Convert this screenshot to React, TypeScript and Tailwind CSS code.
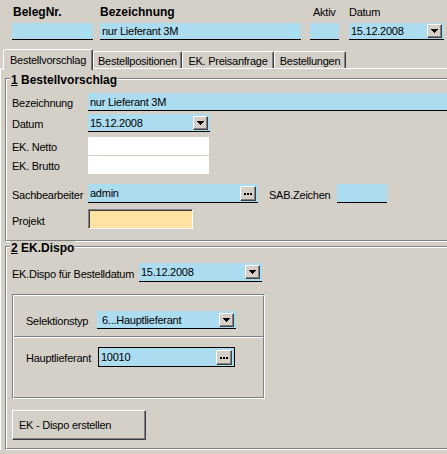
import React from "react";

type BtnKind = "drop" | "dots" | undefined;

const DropBtn = () => (
  <div className="flex h-[14px] w-[15px] shrink-0 items-center justify-center border border-t-white border-l-white border-b-[#404040] border-r-[#404040] bg-[#d4d0c8] shadow-[inset_-1px_-1px_#808080]">
    <svg width="7" height="4" viewBox="0 0 7 4" shapeRendering="crispEdges">
      <path d="M0 0h7v1H0zM1 1h5v1H1zM2 2h3v1H2zM3 3h1v1H3z" fill="#000" />
    </svg>
  </div>
);

const DotsBtn = () => (
  <div className="flex h-[15px] w-[16px] shrink-0 items-center justify-center border border-t-white border-l-white border-b-[#404040] border-r-[#404040] bg-[#d4d0c8] shadow-[inset_-1px_-1px_#808080]">
    <svg width="8" height="2" viewBox="0 0 8 2" shapeRendering="crispEdges" className="mt-[1px]">
      <path d="M0 0h2v2H0zM3 0h2v2H3zM6 0h2v2H6z" fill="#000" />
    </svg>
  </div>
);

interface FieldProps {
  className: string;
  text?: string;
  btn?: BtnKind;
}

const Field = ({ className, text, btn }: FieldProps) => (
  <div className={`flex items-center justify-between pl-[2px] pr-[2px] ${className}`}>
    <span className="whitespace-nowrap leading-[14px]">{text}</span>
    {btn === "drop" && <DropBtn />}
    {btn === "dots" && <DotsBtn />}
  </div>
);

const Tab = ({ label, active, className }: { label: string; active?: boolean; className: string }) => (
  <div
    className={`flex justify-center rounded-t-[2px] border-t border-l border-r border-white border-r-[#404040] bg-[#d4d0c8] leading-[14px] shadow-[inset_-1px_0_#808080] ${
      active ? "-mb-[2px] h-[21px] pt-[3px]" : "h-[17px] pt-[2px]"
    } ${className}`}
  >
    {label}
  </div>
);

const App = () => {
  return (
    <div className="h-[454px] w-[447px] overflow-hidden bg-[#d4d0c8] font-['Liberation_Sans',Arial,sans-serif] text-[11px] tracking-[-0.25px] text-black">
      {/* Kopfzeile */}
      <div className="flex pl-[12px] pt-[5px]">
        <div className="w-[81px]">
          <div className="h-[14px] pl-[1px] text-[12px] font-bold leading-[14px] tracking-normal">BelegNr.</div>
          <Field className="mt-[4px] h-[17px] border-b border-black bg-[#acdcf0]" />
        </div>
        <div className="ml-[7px] w-[201px]">
          <div className="h-[14px] text-[12px] font-bold leading-[14px] tracking-normal">Bezeichnung</div>
          <Field className="mt-[4px] h-[17px] border-b border-black bg-[#acdcf0]" text="nur Lieferant 3M" />
        </div>
        <div className="ml-[9px] w-[29px]">
          <div className="h-[14px] pl-[3px] leading-[14px]">Aktiv</div>
          <Field className="mt-[4px] h-[17px] border-b border-black bg-[#acdcf0]" />
        </div>
        <div className="ml-[10px] w-[95px]">
          <div className="h-[14px] leading-[14px]">Datum</div>
          <Field className="mt-[4px] h-[17px] border-b border-black bg-[#acdcf0] pl-[1px]" text="15.12.2008" btn="drop" />
        </div>
      </div>

      {/* Reiter */}
      <div className="relative z-10 mt-[9px] flex h-[19px] items-end pl-[3px]">
        <Tab label="Bestellvorschlag" active className="w-[90px]" />
        <Tab label="Bestellpositionen" className="w-[89px]" />
        <Tab label="EK. Preisanfrage" className="w-[92px]" />
        <Tab label="Bestellungen" className="w-[72px]" />
      </div>

      <div className="w-[470px] border-t border-l border-white pl-[4px] pt-[9px]">
        {/* 1 Bestellvorschlag */}
        <div className="relative h-[164px] border border-t-[#808080] border-l-[#808080] border-b-white border-r-white">
          <div className="absolute left-[4px] top-[-6px] bg-[#d4d0c8] px-[1px] text-[12px] font-bold leading-[14px] tracking-normal">
            <span className="underline">1</span> Bestellvorschlag
          </div>
          <div className="h-full border border-t-white border-l-white border-b-[#808080] border-r-[#808080] pl-[5px]">
            <div className="mt-[13px] flex h-[18px] items-center">
              <div className="w-[76px] pt-[3px]">Bezeichnung</div>
              <Field className="h-[18px] flex-1 border-b border-black bg-[#acdcf0]" text="nur Lieferant 3M" />
            </div>
            <div className="mt-[3px] flex h-[18px] items-center">
              <div className="w-[76px] pt-[3px]">Datum</div>
              <Field className="h-[18px] w-[122px] border-b border-black bg-[#acdcf0] pl-[1px]" text="15.12.2008" btn="drop" />
            </div>
            <div className="mt-[5px] flex h-[18px] items-center">
              <div className="w-[76px] pt-[3px]">EK. Netto</div>
              <div className="h-[18px] w-[121px] bg-white" />
            </div>
            <div className="mt-[1px] flex h-[18px] items-center">
              <div className="w-[76px] pt-[3px]">EK. Brutto</div>
              <div className="h-[18px] w-[121px] bg-white" />
            </div>
            <div className="mt-[10px] flex h-[19px] items-center">
              <div className="w-[76px] pt-[3px]">Sachbearbeiter</div>
              <Field className="h-[19px] w-[170px] border-b border-black bg-[#acdcf0]" text="admin" btn="dots" />
              <div className="ml-[11px] w-[68px] pt-[3px]">SAB.Zeichen</div>
              <Field className="h-[19px] w-[50px] border-b border-black bg-[#acdcf0]" />
            </div>
            <div className="mt-[6px] flex h-[20px] items-center">
              <div className="w-[76px] pt-[5px]">Projekt</div>
              <div className="h-[20px] w-[105px] border border-t-[#808080] border-l-[#808080] border-b-white border-r-white bg-[#ffe2a2] shadow-[inset_1px_1px_#404040]" />
            </div>
          </div>
        </div>

        {/* 2 EK.Dispo */}
        <div className="relative mt-[4px] h-[204px] border border-t-[#808080] border-l-[#808080] border-b-white border-r-white">
          <div className="absolute left-[4px] top-[-6px] bg-[#d4d0c8] px-[1px] text-[12px] font-bold leading-[14px] tracking-normal">
            <span className="underline">2</span> EK.Dispo
          </div>
          <div className="h-full border border-t-white border-l-white border-b-[#808080] border-r-[#808080] pl-[5px]">
            <div className="mt-[15px] flex h-[19px] items-center">
              <div className="w-[127px] pt-[3px]">EK.Dispo für Bestelldatum</div>
              <Field className="h-[19px] w-[123px] border-b border-black bg-[#acdcf0] pl-[1px]" text="15.12.2008" btn="drop" />
            </div>

            <div className="mt-[12px] h-[105px] w-[253px] border border-t-[#808080] border-l-[#808080] border-b-white border-r-white">
              <div className="h-full border border-t-white border-l-white border-b-[#808080] border-r-[#808080]">
                <div className="mt-[15px] flex h-[18px] items-center pl-[12px]">
                  <div className="w-[71px] pt-[3px]">Selektionstyp</div>
                  <Field className="h-[18px] w-[139px] border-b border-black bg-[#acdcf0] pl-[5px]" text="6...Hauptlieferant" btn="drop" />
                </div>
                <div className="mt-[7px] h-[2px] border-t border-b border-t-[#808080] border-b-white" />
                <div className="mt-[9px] flex h-[20px] items-center pl-[12px]">
                  <div className="w-[72px] pt-[3px]">Hauptlieferant</div>
                  <Field className="h-[20px] w-[137px] border border-black bg-[#acdcf0] pl-[1px] pr-[1px]" text="10010" btn="dots" />
                </div>
              </div>
            </div>

            <button className="mt-[11px] flex h-[30px] w-[134px] items-center border border-t-white border-l-white border-b-[#404040] border-r-[#404040] bg-[#d4d0c8] pl-[6px] shadow-[inset_-1px_-1px_#808080]">
              EK - Dispo erstellen
            </button>
          </div>
        </div>
      </div>
    </div>
  );
};

export default App;
